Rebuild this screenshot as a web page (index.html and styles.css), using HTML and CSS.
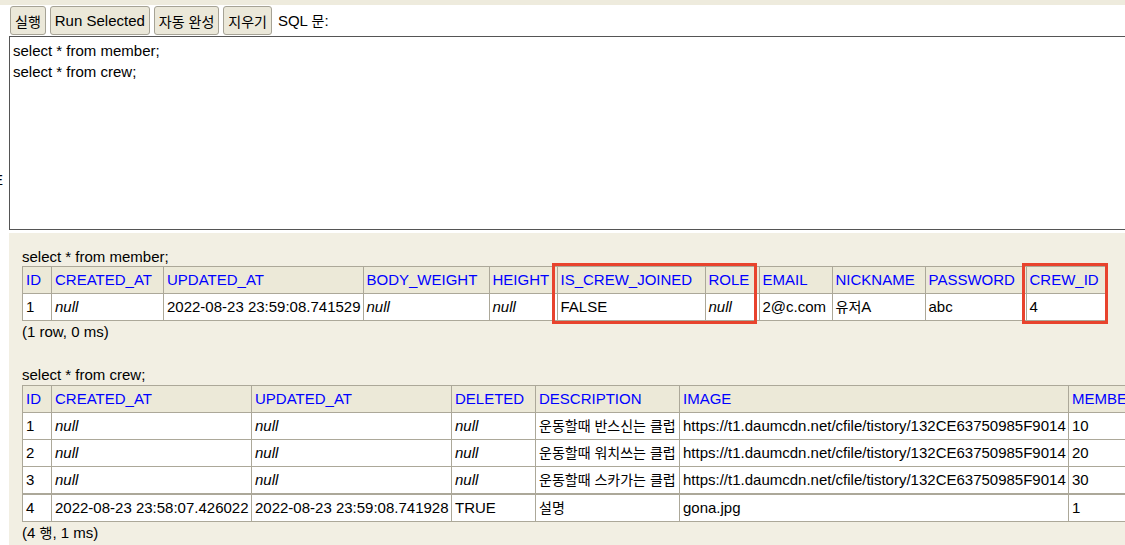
FILE: index.html
```html
<!DOCTYPE html>
<html lang="ko">
<head>
<meta charset="utf-8">
<title>H2 Console</title>
<link rel="stylesheet" href="styles.css">
</head>
<body>
<div class="topstrip"></div>
<div class="toolbar">
  <button class="btn"><span class="ko">실행</span></button>
  <button class="btn">Run Selected</button>
  <button class="btn"><span class="ko">자동 완성</span></button>
  <button class="btn"><span class="ko">지우기</span></button>
  <span class="label">SQL <span class="ko">문</span>:</span>
</div>
<span class="edge-glyph">E</span>
<textarea class="editor" spellcheck="false" readonly>select * from member;
select * from crew;</textarea>

<div class="results">
  <div class="query">select * from member;</div>
  <div class="table-wrap">
    <table class="rs">
      <tr>
        <th class="w29">ID</th>
        <th class="w112">CREATED_AT</th>
        <th class="w199">UPDATED_AT</th>
        <th class="w126">BODY_WEIGHT</th>
        <th class="w68">HEIGHT</th>
        <th class="w148">IS_CREW_JOINED</th>
        <th class="w54">ROLE</th>
        <th class="w73">EMAIL</th>
        <th class="w93">NICKNAME</th>
        <th class="w101">PASSWORD</th>
        <th class="w80">CREW_ID</th>
      </tr>
      <tr>
        <td>1</td>
        <td><i>null</i></td>
        <td>2022-08-23 23:59:08.741529</td>
        <td><i>null</i></td>
        <td><i>null</i></td>
        <td>FALSE</td>
        <td><i>null</i></td>
        <td>2@c.com</td>
        <td><span class="ko">유저</span>A</td>
        <td>abc</td>
        <td>4</td>
      </tr>
    </table>
    <div class="mark mark-a"></div>
    <div class="mark mark-b"></div>
  </div>
  <div class="status">(1 row, 0 ms)</div>

  <div class="query second">select * from crew;</div>
  <div class="table-wrap">
    <table class="rs">
      <tr>
        <th class="w29">ID</th>
        <th class="w200">CREATED_AT</th>
        <th class="w200">UPDATED_AT</th>
        <th class="w84">DELETED</th>
        <th class="w144">DESCRIPTION</th>
        <th class="w389">IMAGE</th>
        <th>MEMBER_COUNT</th>
      </tr>
      <tr>
        <td>1</td>
        <td><i>null</i></td>
        <td><i>null</i></td>
        <td><i>null</i></td>
        <td><span class="ko">운동할때 반스신는 클럽</span></td>
        <td>https://t1.daumcdn.net/cfile/tistory/132CE63750985F9014</td>
        <td>10</td>
      </tr>
      <tr>
        <td>2</td>
        <td><i>null</i></td>
        <td><i>null</i></td>
        <td><i>null</i></td>
        <td><span class="ko">운동할때 워치쓰는 클럽</span></td>
        <td>https://t1.daumcdn.net/cfile/tistory/132CE63750985F9014</td>
        <td>20</td>
      </tr>
      <tr>
        <td>3</td>
        <td><i>null</i></td>
        <td><i>null</i></td>
        <td><i>null</i></td>
        <td><span class="ko">운동할때 스카가는 클럽</span></td>
        <td>https://t1.daumcdn.net/cfile/tistory/132CE63750985F9014</td>
        <td>30</td>
      </tr>
      <tr class="sep">
        <td>4</td>
        <td>2022-08-23 23:58:07.426022</td>
        <td>2022-08-23 23:59:08.741928</td>
        <td>TRUE</td>
        <td><span class="ko">설명</span></td>
        <td>gona.jpg</td>
        <td>1</td>
      </tr>
    </table>
  </div>
  <div class="status">(4 <span class="ko">행</span>, 1 ms)</div>
</div>
</body>
</html>
```

FILE: styles.css
```css
html, body {
  margin: 0;
  padding: 0;
  overflow: hidden;
}

body {
  position: relative;
  width: 1125px;
  height: 545px;
  background: #ffffff;
  color: #000000;
  font-family: "Liberation Sans", "Noto Sans CJK KR", Arial, sans-serif;
  font-size: 15px;
}

.ko {
  font-family: "Noto Sans CJK KR", "Liberation Sans", sans-serif;
  font-size: 14px;
  line-height: 1;
}

.topstrip {
  height: 5px;
  background: #eeebdd;
}

.toolbar {
  display: flex;
  align-items: center;
  gap: 4px;
  padding: 1px 0 1px 10px;
}

.btn {
  display: flex;
  align-items: center;
  box-sizing: border-box;
  height: 29px;
  padding: 0 4px;
  margin: 0;
  font-family: inherit;
  font-size: 15px;
  color: #000000;
  background: #ebe8d9;
  border: 1px solid #a6a396;
  border-radius: 3px;
}

.label {
  margin-left: 2px;
  font-size: 15px;
}

.edge-glyph {
  position: absolute;
  left: -7px;
  top: 171px;
  font-size: 15px;
  line-height: 18px;
}

.editor {
  display: block;
  box-sizing: border-box;
  width: 1300px;
  height: 194px;
  margin: 0 0 0 9px;
  padding: 3px;
  border: 1px solid #555555;
  border-radius: 0;
  background: #ffffff;
  color: #000000;
  font-family: "Liberation Sans", Arial, sans-serif;
  font-size: 15px;
  line-height: 21px;
  resize: none;
  outline: none;
  overflow: hidden;
}

.results {
  box-sizing: border-box;
  height: 400px;
  margin: 3px 0 0 9px;
  padding: 14px 0 0 13px;
  background: #f2efe3;
}

.query,
.status {
  line-height: 19px;
  white-space: nowrap;
}

.status {
  padding-top: 1px;
}

.query.second {
  margin-top: 24px;
  margin-bottom: 1px;
}

.table-wrap {
  position: relative;
  width: max-content;
}

.rs {
  border-collapse: collapse;
  font-size: 15px;
  line-height: 18px;
}

.rs th,
.rs td {
  box-sizing: border-box;
  border: 1px solid #aca899;
  padding: 4px 3px;
  text-align: left;
  white-space: nowrap;
  font-weight: normal;
  vertical-align: middle;
}

.rs td {
  padding-right: 2px;
  background: #ffffff;
}

.rs th {
  background: #ece9d8;
  color: #0000ff;
}

.rs tr.sep td {
  border-top-width: 2px;
}

.rs i {
  font-style: italic;
}

.w29 { width: 29px; }
.w54 { width: 54px; }
.w68 { width: 68px; }
.w73 { width: 73px; }
.w80 { width: 80px; }
.w84 { width: 84px; }
.w93 { width: 93px; }
.w101 { width: 101px; }
.w112 { width: 112px; }
.w126 { width: 126px; }
.w144 { width: 144px; }
.w148 { width: 148px; }
.w199 { width: 199px; }
.w200 { width: 200px; }
.w389 { width: 389px; }

.mark {
  position: absolute;
  top: -3px;
  height: 61px;
  box-sizing: border-box;
  border: 3px solid #e8432d;
  pointer-events: none;
}

.mark-a {
  left: 530px;
  width: 205px;
}

.mark-b {
  left: 1000px;
  width: 86px;
}
```
